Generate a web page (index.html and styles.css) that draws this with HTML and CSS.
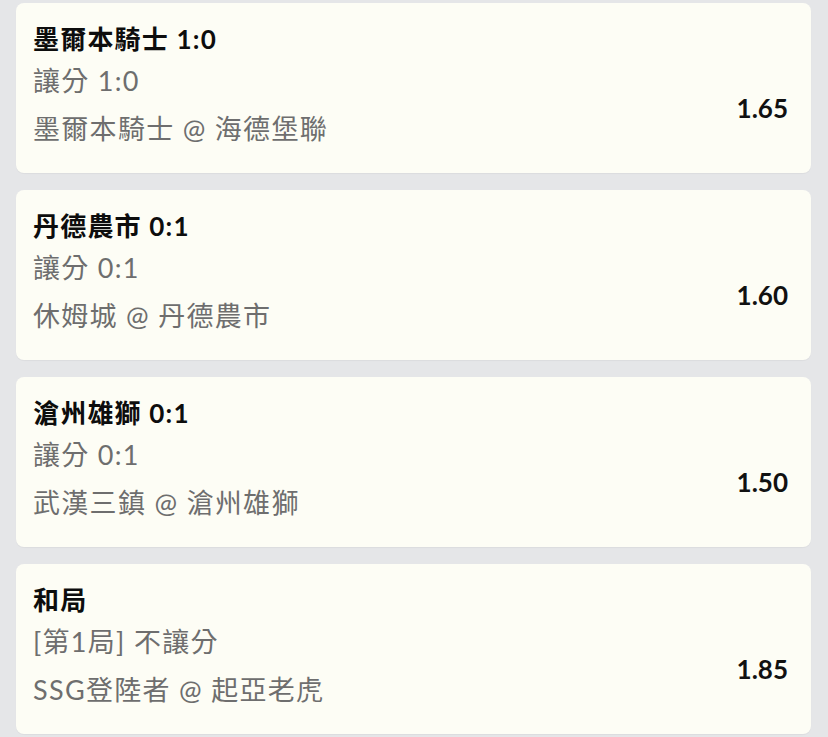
FILE: index.html
```html
<!DOCTYPE html>
<html lang="zh-Hant">
<head>
  <meta charset="UTF-8">
  <meta name="viewport" content="width=device-width, initial-scale=1.0">
  <title>投注單</title>
  <link rel="stylesheet" href="styles.css">
</head>
<body>
  <div class="bet-list">
    <div class="bet-card">
      <div class="bet-title">墨爾本騎士 1:0</div>
      <div class="bet-row">
        <div class="bet-info">
          <div class="bet-line">讓分 1:0</div>
          <div class="bet-line">墨爾本騎士 @ 海德堡聯</div>
        </div>
        <div class="bet-odds">1.65</div>
      </div>
    </div>
    <div class="bet-card">
      <div class="bet-title">丹德農市 0:1</div>
      <div class="bet-row">
        <div class="bet-info">
          <div class="bet-line">讓分 0:1</div>
          <div class="bet-line">休姆城 @ 丹德農市</div>
        </div>
        <div class="bet-odds">1.60</div>
      </div>
    </div>
    <div class="bet-card">
      <div class="bet-title">滄州雄獅 0:1</div>
      <div class="bet-row">
        <div class="bet-info">
          <div class="bet-line">讓分 0:1</div>
          <div class="bet-line">武漢三鎮 @ 滄州雄獅</div>
        </div>
        <div class="bet-odds">1.50</div>
      </div>
    </div>
    <div class="bet-card">
      <div class="bet-title">和局</div>
      <div class="bet-row">
        <div class="bet-info">
          <div class="bet-line">[第1局] 不讓分</div>
          <div class="bet-line">SSG登陸者 @ 起亞老虎</div>
        </div>
        <div class="bet-odds">1.85</div>
      </div>
    </div>
  </div>
</body>
</html>
```

FILE: styles.css
```css
body {
  margin: 0;
  background-color: #e5e6e8;
  font-family: Lato, "Noto Sans CJK TC", sans-serif;
  color: #111;
}
.bet-list {
  display: flex;
  flex-direction: column;
  gap: 17px;
  padding: 3px 17px 3px 16px;
}
.bet-card {
  background-color: #fdfdf5;
  border-radius: 8px;
  padding: 18px 23px 20px 17px;
  box-shadow: 0 1px 1px rgba(0, 0, 0, 0.04);
}
.bet-title {
  font-size: 26px;
  font-weight: 700;
  line-height: 36px;
  letter-spacing: 1.2px;
  color: #0d0d0d;
}
.bet-row {
  display: flex;
  justify-content: space-between;
  align-items: center;
}
.bet-line {
  font-size: 27px;
  line-height: 48px;
  letter-spacing: 1.3px;
  color: #6e6e6e;
}
.bet-odds {
  font-size: 26px;
  font-weight: 700;
  color: #111;
  padding-top: 6px;
}
```
